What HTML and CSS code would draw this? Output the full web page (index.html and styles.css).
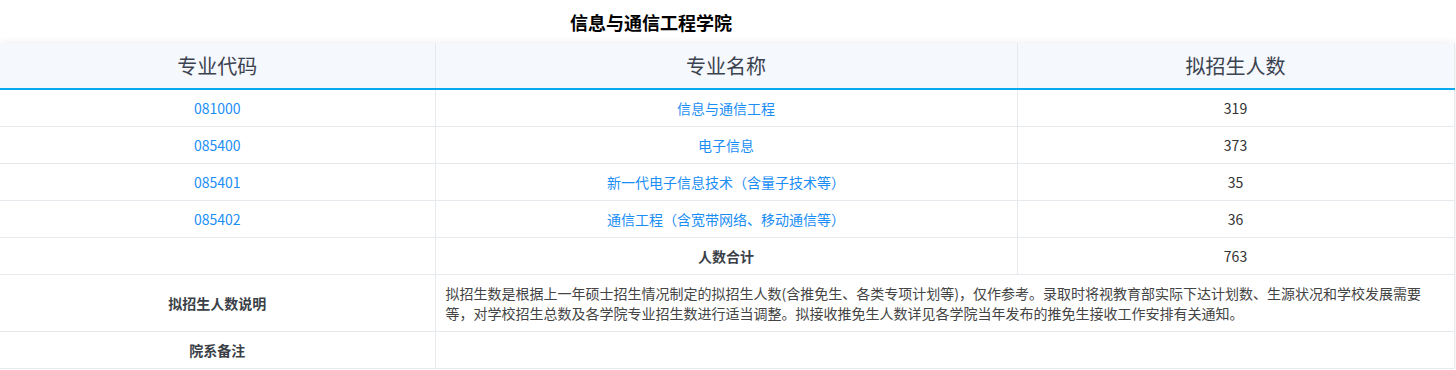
FILE: index.html
```html
<!DOCTYPE html>
<html lang="zh-CN">
<head>
    <meta charset="UTF-8">
    <title>信息与通信工程学院</title>
    <link rel="stylesheet" href="styles.css">
</head>
<body>
    <h2 class="title">信息与通信工程学院</h2>

    <table class="plan">
        <colgroup>
            <col class="c1">
            <col class="c2">
            <col class="c3">
        </colgroup>
        <thead>
            <tr>
                <th>专业代码</th>
                <th>专业名称</th>
                <th>拟招生人数</th>
            </tr>
        </thead>
        <tbody>
            <tr>
                <td><a href="#">081000</a></td>
                <td><a href="#">信息与通信工程</a></td>
                <td>319</td>
            </tr>
            <tr>
                <td><a href="#">085400</a></td>
                <td><a href="#">电子信息</a></td>
                <td>373</td>
            </tr>
            <tr>
                <td><a href="#">085401</a></td>
                <td><a href="#">新一代电子信息技术（含量子技术等）</a></td>
                <td>35</td>
            </tr>
            <tr>
                <td><a href="#">085402</a></td>
                <td><a href="#">通信工程（含宽带网络、移动通信等）</a></td>
                <td>36</td>
            </tr>
            <tr>
                <td></td>
                <td class="bold">人数合计</td>
                <td>763</td>
            </tr>
            <tr class="note">
                <td class="bold">拟招生人数说明</td>
                <td colspan="2" class="text">拟招生数是根据上一年硕士招生情况制定的拟招生人数(含推免生、各类专项计划等)，仅作参考。录取时将视教育部实际下达计划数、生源状况和学校发展需要等，对学校招生总数及各学院专业招生数进行适当调整。拟接收推免生人数详见各学院当年发布的推免生接收工作安排有关通知。</td>
            </tr>
            <tr>
                <td class="bold">院系备注</td>
                <td colspan="2"></td>
            </tr>
        </tbody>
    </table>
</body>
</html>
```

FILE: styles.css
```css
body {
    margin: 0;
    font-family: "Noto Sans CJK SC", "Noto Sans", sans-serif;
    color: #333;
    background: #fff;
}
.title {
    width: 1302px;
    margin: 0;
    padding-top: 10px;
    height: 43px;
    box-sizing: border-box;
    text-align: center;
    font-size: 18px;
    line-height: 24px;
    font-weight: bold;
    color: #000;
}
.plan {
    width: 1454px;
    border-collapse: collapse;
    table-layout: fixed;
    box-shadow: 0 0 8px rgba(0, 0, 0, 0.08);
    font-size: 14px;
}
.c1 { width: 435px; }
.c2 { width: 582px; }
.c3 { width: 437px; }
.plan th {
    height: 45px;
    padding: 0;
    background: #f5f8fd;
    font-size: 20px;
    font-weight: normal;
    color: #3c4350;
    border-left: 1px solid #e6eaee;
    border-right: 1px solid #e6eaee;
    border-bottom: 2px solid #08a9ee;
}
.plan th:first-child {
    border-left: none;
}
.plan td {
    height: 36px;
    padding: 0;
    text-align: center;
    line-height: 20px;
    border: 1px solid #e6eaee;
}
.plan td:first-child {
    border-left: none;
}
.plan a {
    color: #1b8ef5;
    text-decoration: none;
}
.bold {
    font-weight: bold;
    color: #3a3f48;
}
.note td {
    height: 56px;
}
.plan td.text {
    text-align: left;
    padding: 0 24px 0 10px;
    color: #444;
}
```
